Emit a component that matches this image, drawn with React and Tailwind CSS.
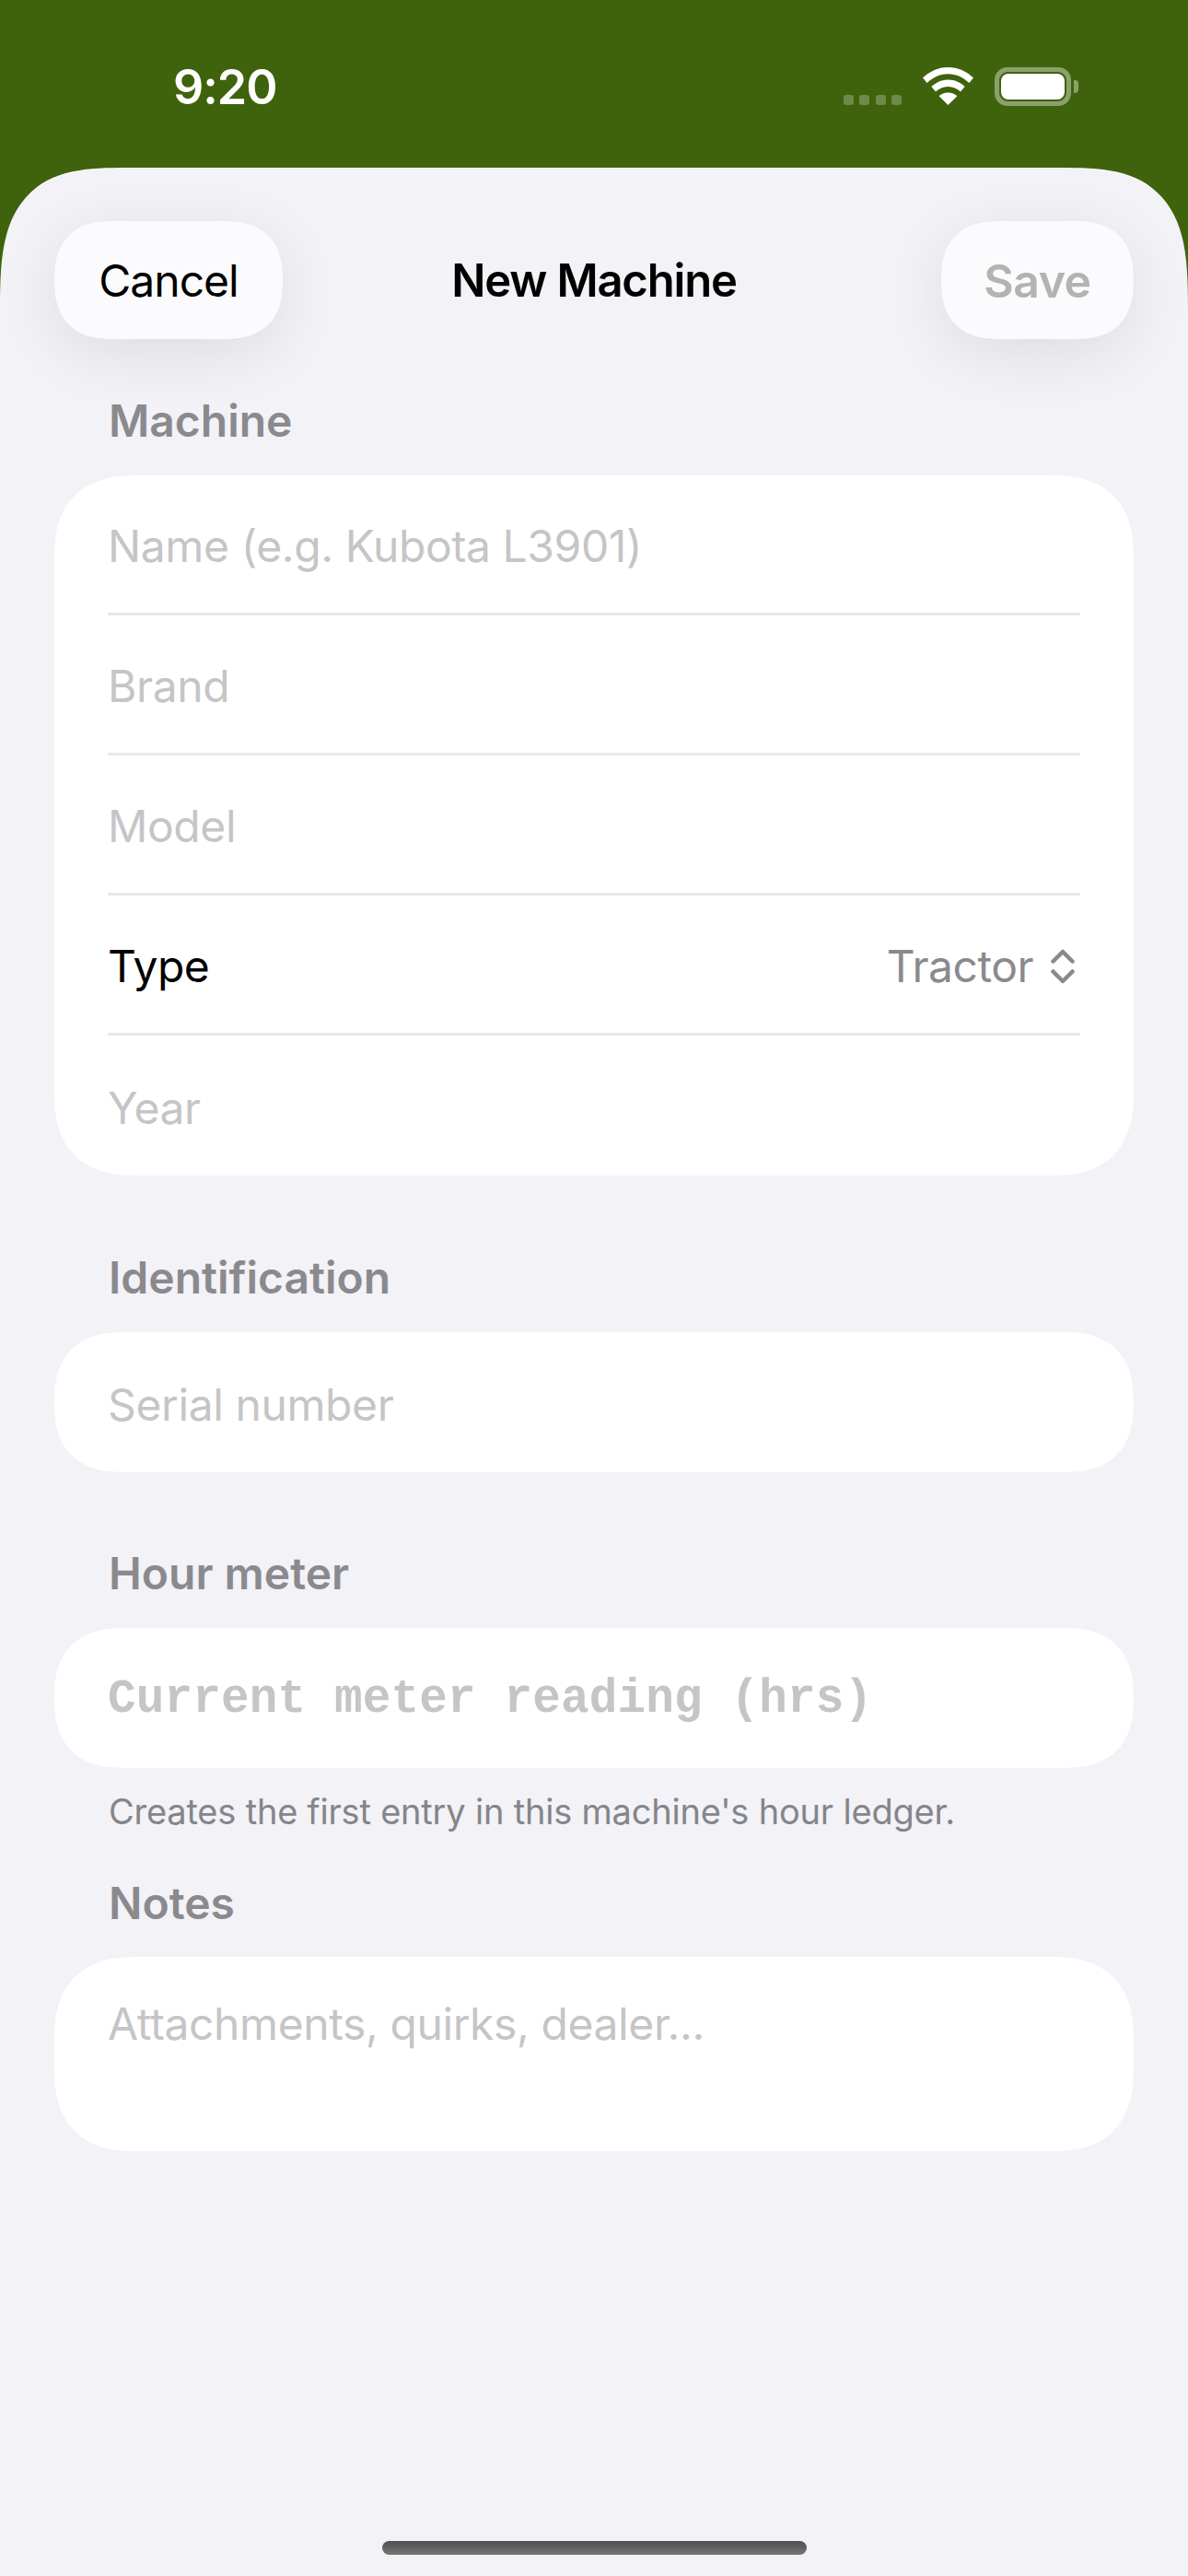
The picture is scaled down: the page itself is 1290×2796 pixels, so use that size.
const MACHINE_FIELDS = ['Name (e.g. Kubota L3901)', 'Brand', 'Model']

function StatusBar() {
  return (
    <div className="h-[182px] flex items-start justify-between pl-[188px] pr-[119px] pt-[73px] text-white">
      <span className="text-[52px] leading-[44px] font-semibold tracking-[-1px]">9:20</span>
      <div className="flex items-start">
        <div className="flex gap-[6.5px] mt-[30px] mr-[23px]">
          {[0, 1, 2, 3].map((n) => (
            <span key={n} className="w-[11px] h-[11px] rounded-[3px] bg-white/25" />
          ))}
        </div>
        <svg width="55" height="41" viewBox="0 0 55 41" className="mr-[23px]" fill="white">
          <path d="M27.5 0C17 0 7.6 4.1 0 11.6l4.6 5.4C11 10.9 18.8 7.2 27.5 7.2s16.5 3.7 22.9 9.8l4.6-5.4C47.4 4.1 38 0 27.5 0Z" />
          <path d="M27.5 13.6c-6.8 0-13 2.7-18.2 7.5l4.7 5.4c3.7-3.4 8.3-5.5 13.5-5.5s9.8 2.1 13.5 5.5l4.7-5.4c-5.2-4.8-11.4-7.5-18.2-7.5Z" />
          <path d="M27.5 27.4c-3.8 0-7.3 1.4-9.9 3.8L27.5 41l9.9-9.8c-2.6-2.4-6.1-3.8-9.9-3.8Z" />
        </svg>
        <div className="flex items-center">
          <div className="w-[83px] h-[42px] rounded-[14px] border-[5px] border-white/40 p-[2px]">
            <div className="w-full h-full rounded-[8px] bg-white" />
          </div>
          <span className="ml-[3px] w-[5px] h-[14px] rounded-r-[4px] bg-white/40" />
        </div>
      </div>
    </div>
  )
}

function SectionLabel({ children, className = '' }) {
  return (
    <div className={`px-[118px] text-[#8a8a8e] text-[48px] leading-[56px] font-semibold ${className}`}>
      {children}
    </div>
  )
}

function Placeholder({ children }) {
  return <span className="text-[#c5c5c7] text-[48px] tracking-[-0.4px]">{children}</span>
}

function Row({ children, last }) {
  return (
    <div className={`h-[152px] flex items-center justify-between pt-[5px] ${last ? '' : 'border-b-[3px] border-[#e8e8ea]'}`}>
      {children}
    </div>
  )
}

function Card({ children, className = '' }) {
  return (
    <div className={`mx-[59px] bg-white rounded-[90px] [corner-shape:superellipse(1.3)] px-[58px] ${className}`}>
      {children}
    </div>
  )
}

// up/down carets next to the picker value
function UpDownCaret() {
  return (
    <svg width="26" height="38" viewBox="0 0 26 38" className="ml-[19px] mr-[6px]" fill="none" stroke="currentColor" strokeWidth="4.5" strokeLinecap="round" strokeLinejoin="round">
      <path d="M2.5 13.5 13 3l10.5 10.5" />
      <path d="M2.5 24.5 13 35l10.5-10.5" />
    </svg>
  )
}

export default function App() {
  return (
    <div className="w-[1290px] h-[2796px] bg-[#3f630c] overflow-hidden flex flex-col font-['Inter',sans-serif]">
      <StatusBar />
      <div className="relative flex-1 bg-[#f2f2f7] rounded-t-[140px_155px] [corner-shape:superellipse(1.6)] border-t border-white/80">
        {/* Nav bar */}
        <div className="grid grid-cols-[1fr_auto_1fr] items-center px-[59px] pt-[57px]">
          <div>
            <button className="h-[128px] w-[248px] pt-[2px] rounded-[64px] [corner-shape:superellipse(1.3)] bg-[#fbfbfe] text-black text-[48px] tracking-[-1px] shadow-[0_16px_70px_rgba(0,0,0,0.09)]">
              Cancel
            </button>
          </div>
          <div className="pt-[2px] text-black text-[49px] font-semibold tracking-[-1.2px]">New Machine</div>
          <div className="flex justify-end">
            <button className="h-[128px] w-[209px] pt-[2px] rounded-[64px] [corner-shape:superellipse(1.3)] bg-[#fbfbfe] text-[#b3b3b3] text-[50px] font-semibold tracking-[-0.5px] shadow-[0_16px_70px_rgba(0,0,0,0.09)]">
              Save
            </button>
          </div>
        </div>

        <SectionLabel className="mt-[61px]">Machine</SectionLabel>
        <Card className="mt-[31px]">
          {MACHINE_FIELDS.map((label) => (
            <Row key={label}><Placeholder>{label}</Placeholder></Row>
          ))}
          <Row>
            <span className="text-black text-[48px] tracking-[-0.5px]">Type</span>
            <span className="flex items-center text-[#8a8a8e] text-[48px] tracking-[-0.5px]">
              Tractor
              <UpDownCaret />
            </span>
          </Row>
          <Row last><Placeholder>Year</Placeholder></Row>
        </Card>

        <SectionLabel className="mt-[83px]">Identification</SectionLabel>
        <Card className="mt-[31px]">
          <Row last><Placeholder>Serial number</Placeholder></Row>
        </Card>

        <SectionLabel className="mt-[82px]">Hour meter</SectionLabel>
        <Card className="mt-[31px]">
          <Row last>
            <span className="text-[#c5c5c7] text-[51px] tracking-[0.15px] font-bold font-['Liberation_Mono',monospace]">
              Current meter reading (hrs)
            </span>
          </Row>
        </Card>
        <div className="px-[118px] mt-[27px] text-[#85858a] text-[38px] leading-[40px] tracking-[-0.2px]">
          Creates the first entry in this machine's hour ledger.
        </div>

        <SectionLabel className="mt-[52px]">Notes</SectionLabel>
        <Card className="mt-[30px] h-[211px] pt-[37px]">
          <Placeholder>Attachments, quirks, dealer...</Placeholder>
        </Card>

        {/* Home indicator */}
        <div className="absolute bottom-[23px] left-[415px] w-[461px] h-[15px] rounded-[8px] bg-gradient-to-b from-[#4f4f4f] to-[#777777]" />
      </div>
    </div>
  )
}
